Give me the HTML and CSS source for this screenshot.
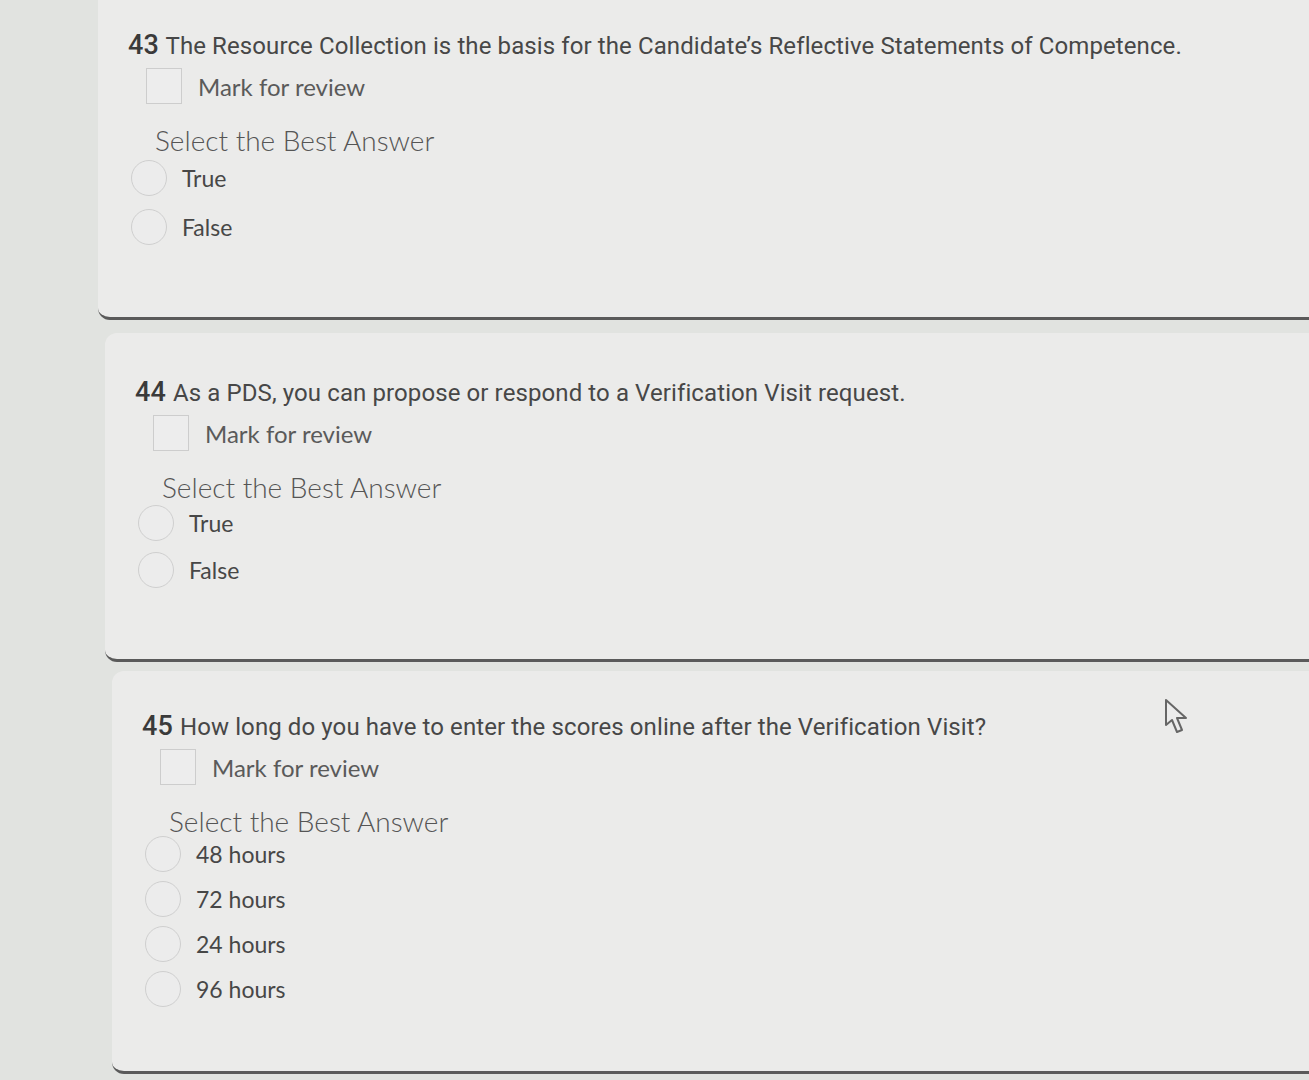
FILE: index.html
```html
<!DOCTYPE html>
<html>
<head>
<meta charset="utf-8">
<link rel="stylesheet" href="styles.css">
</head>
<body>
<div class="page">
  <section class="card card-43">
    <h2 class="title"><span class="num">43</span> The Resource Collection is the basis for the Candidate’s Reflective Statements of Competence.</h2>
    <label class="review"><span class="box"></span><span>Mark for review</span></label>
    <div class="prompt">Select the Best Answer</div>
    <ul class="options gap-49">
      <li><span class="radio"></span><span>True</span></li>
      <li><span class="radio"></span><span>False</span></li>
    </ul>
  </section>
  <section class="card card-44">
    <h2 class="title"><span class="num">44</span> As a PDS, you can propose or respond to a Verification Visit request.</h2>
    <label class="review"><span class="box"></span><span>Mark for review</span></label>
    <div class="prompt">Select the Best Answer</div>
    <ul class="options gap-47">
      <li><span class="radio"></span><span>True</span></li>
      <li><span class="radio"></span><span>False</span></li>
    </ul>
  </section>
  <section class="card card-45">
    <h2 class="title"><span class="num">45</span> How long do you have to enter the scores online after the Verification Visit?</h2>
    <label class="review"><span class="box"></span><span>Mark for review</span></label>
    <div class="prompt">Select the Best Answer</div>
    <ul class="options gap-45">
      <li><span class="radio"></span><span>48 hours</span></li>
      <li><span class="radio"></span><span>72 hours</span></li>
      <li><span class="radio"></span><span>24 hours</span></li>
      <li><span class="radio"></span><span>96 hours</span></li>
    </ul>
    <svg class="cursor" width="34" height="42" viewBox="0 0 34 42">
      <path d="M4 3 L4 28 L10 23 L15 35 L20 33 L15 21 L24 21 Z" fill="#ececec" stroke="#666" stroke-width="2" stroke-linejoin="round"/>
    </svg>
  </section>
</div>
</body>
</html>
```
FILE: styles.css
```css
html, body {
  margin: 0;
  padding: 0;
  background: #e1e3e0;
  overflow: hidden;
  height: 1080px;
}
.page {
  display: flex;
  flex-direction: column;
  margin-top: -20px;
}
.card {
  position: relative;
  background: #ebebea;
  border-radius: 12px;
  border-bottom: 3px solid #5a5a5a;
  margin-right: -30px;
  padding-left: 30px;
  color: #444;
}
.card-43 {
  margin-left: 98px;
  padding-top: 50px;
  padding-bottom: 72px;
}
.card-44 {
  margin-left: 105px;
  margin-top: 13px;
  padding-top: 44px;
  padding-bottom: 71px;
}
.card-45 {
  margin-left: 112px;
  margin-top: 9px;
  padding-top: 40px;
  padding-bottom: 64px;
}
.title {
  margin: 0;
  font-family: Roboto, "Liberation Sans", sans-serif;
  font-weight: 400;
  font-size: 24px;
  letter-spacing: 0.1px;
  line-height: 30px;
  color: #474747;
  white-space: nowrap;
}
.num {
  font-size: 27px;
  font-weight: 500;
  color: #3a3a3a;
  margin-right: 1px;
}
.review {
  display: flex;
  align-items: center;
  gap: 16px;
  margin-top: 7px;
  margin-left: 18px;
  font-family: Lato, "Open Sans", sans-serif;
  font-size: 24px;
  color: #5a5a5a;
}
.box {
  width: 34px;
  height: 34px;
  border: 1px solid #cdcdcd;
  background: #ededed;
}
.prompt {
  margin-top: 18px;
  margin-left: 27px;
  font-family: Lato, "Open Sans", sans-serif;
  font-weight: 300;
  font-size: 28px;
  line-height: 36px;
  color: #555;
}
.options {
  list-style: none;
  margin: 0;
  padding: 0;
  margin-left: 3px;
  display: flex;
  flex-direction: column;
}
.gap-49 { gap: 13px; margin-top: 2px; }
.gap-47 { gap: 11px; margin-top: 0; }
.gap-45 { gap: 9px; margin-top: -3px; }
.options li {
  display: flex;
  align-items: center;
  gap: 15px;
  font-family: Lato, "Open Sans", sans-serif;
  font-size: 23px;
  color: #474747;
  height: 36px;
}
.radio {
  width: 34px;
  height: 34px;
  border: 1px solid #cfcfcf;
  border-radius: 50%;
  background: #ececec;
  flex: none;
}
.cursor {
  position: absolute;
  left: 1050px;
  top: 26px;
}
```
